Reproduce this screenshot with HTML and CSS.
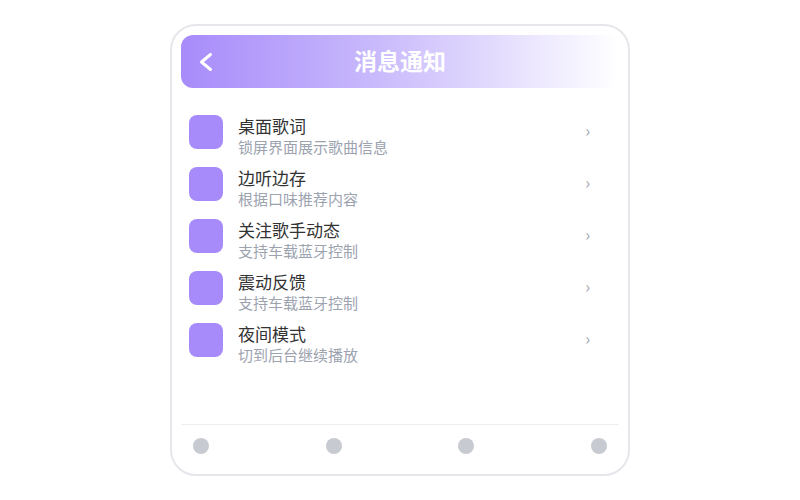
FILE: index.html
```html
<!DOCTYPE html>
<html lang="zh">
<head>
  <meta charset="UTF-8" />
  <title>消息通知</title>
  <link rel="stylesheet" href="styles.css">
</head>
<body>
  <div class="phone">
    <header class="topbar">
      <svg class="back" width="16" height="22" viewBox="0 0 16 22" aria-label="返回">
        <path d="M13.5 3.5 L4.5 11 L13.5 18.5" fill="none" stroke="#fff" stroke-width="3" stroke-linecap="round" stroke-linejoin="round"/>
      </svg>
      <h1>消息通知</h1>
    </header>

    <ul class="list">
      <li class="row">
        <span class="icon"></span>
        <div class="text">
          <div class="title">桌面歌词</div>
          <div class="sub">锁屏界面展示歌曲信息</div>
        </div>
        <span class="arrow">›</span>
      </li>
      <li class="row">
        <span class="icon"></span>
        <div class="text">
          <div class="title">边听边存</div>
          <div class="sub">根据口味推荐内容</div>
        </div>
        <span class="arrow">›</span>
      </li>
      <li class="row">
        <span class="icon"></span>
        <div class="text">
          <div class="title">关注歌手动态</div>
          <div class="sub">支持车载蓝牙控制</div>
        </div>
        <span class="arrow">›</span>
      </li>
      <li class="row">
        <span class="icon"></span>
        <div class="text">
          <div class="title">震动反馈</div>
          <div class="sub">支持车载蓝牙控制</div>
        </div>
        <span class="arrow">›</span>
      </li>
      <li class="row">
        <span class="icon"></span>
        <div class="text">
          <div class="title">夜间模式</div>
          <div class="sub">切到后台继续播放</div>
        </div>
        <span class="arrow">›</span>
      </li>
    </ul>

    <nav class="tabs">
      <span class="dot"></span>
      <span class="dot"></span>
      <span class="dot"></span>
      <span class="dot"></span>
    </nav>
  </div>
</body>
</html>
```

FILE: styles.css
```css
* {
  box-sizing: border-box;
}
body {
  margin: 0;
  background: #fff;
  font-family: "Noto Sans CJK SC", "Noto Sans", sans-serif;
  display: flex;
  justify-content: center;
  padding-top: 24px;
}

/* Marco del móvil */
.phone {
  width: 460px;
  height: 452px;
  border: 2px solid #e5e7eb;
  border-radius: 26px;
  padding: 9px 9px 8px;
  display: flex;
  flex-direction: column;
  background: #fff;
}

/* Cabecera */
.topbar {
  height: 53px;
  border-radius: 12px;
  background: linear-gradient(90deg, #a78bfa 0%, #c9bafc 45%, #ffffff 100%);
  display: flex;
  align-items: center;
  position: relative;
}
.back {
  position: absolute;
  left: 16px;
  top: 16px;
}
.topbar h1 {
  flex: 1;
  margin: 0 0 4px;
  text-align: center;
  color: #fff;
  font-size: 23px;
  line-height: 30px;
  font-weight: 700;
}

/* Lista */
.list {
  list-style: none;
  margin: 18px 0 0;
  padding: 0;
  flex: 1;
}
.row {
  height: 52px;
  display: flex;
  align-items: flex-start;
  padding: 9px 29px 0 8px;
}
.icon {
  width: 34px;
  height: 34px;
  border-radius: 8px;
  background: #a78bfa;
  flex-shrink: 0;
}
.text {
  flex: 1;
  margin-left: 15px;
}
.title {
  font-size: 17px;
  line-height: 22px;
  color: #333;
}
.sub {
  font-size: 15px;
  line-height: 20px;
  color: #9ca3af;
}
.arrow {
  color: #9ca3af;
  font-size: 16px;
  line-height: 30px;
}

/* Barra inferior */
.tabs {
  border-top: 1px solid #eceef1;
  padding: 13px 12px 12px;
  display: flex;
  justify-content: space-between;
}
.dot {
  width: 16px;
  height: 16px;
  border-radius: 50%;
  background: #c7cbd1;
}
```
